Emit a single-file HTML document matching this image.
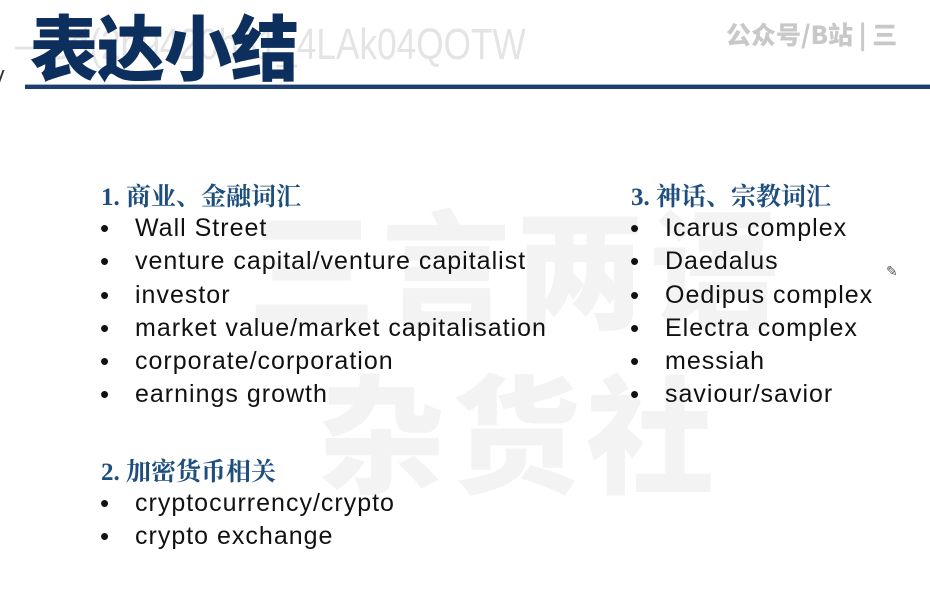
<!DOCTYPE html>
<html><head><meta charset="utf-8"><style>
body{margin:0;width:930px;height:600px;overflow:hidden;background:#fff;position:relative;font-family:"Liberation Sans","Noto Sans CJK SC",sans-serif}
.abs{position:absolute;white-space:nowrap}
.title{left:30px;top:-8px;font-size:68px;font-weight:900;color:#0c2f5e;font-family:"Noto Sans CJK SC",sans-serif;letter-spacing:-1px;transform:scaleY(1.05);transform-origin:top left}
.wm1{left:15px;top:20px;font-size:44px;color:#e4e4e4;transform:scaleX(.8);transform-origin:left}
.brand{left:726px;top:16px;font-size:25px;font-weight:900;color:#c8c8c8;font-family:"Noto Sans CJK SC",sans-serif}
.line{left:25px;top:84px;width:905px;height:4px;background:#1e3f6e;border-top:1px solid #9fb0c8}
.big{font-family:"Noto Sans CJK SC",sans-serif;font-weight:900;color:#f3f3f3;font-size:128px;letter-spacing:6px}
h2{position:absolute;margin:0;font-size:25px;font-weight:bold;color:#1d4e7e;font-family:"Liberation Serif","Noto Serif CJK SC",serif;white-space:nowrap}
ul{position:absolute;margin:0;padding:0;list-style:none;font-size:25px;color:#111;font-family:"Liberation Sans",sans-serif}
li{height:33.3px;line-height:33.3px;position:relative;padding-left:35px;white-space:nowrap;letter-spacing:1px}
li:before{content:"•";position:absolute;left:0;font-size:26px}
</style></head><body>
<div class="abs big" style="left:248px;top:170px">三言两语</div>
<div class="abs big" style="left:318px;top:335px">杂货社</div>
<div class="abs wm1">—3d(2b9420b31_4LAk04QOTW</div>
<div class="abs title">表达小结</div>
<div class="abs brand">公众号/B站 | 三</div>
<div class="abs" style="left:0;top:70px;width:5px;height:14px;border-left:2px solid #333;transform:skewX(-20deg)"></div>
<div class="abs line"></div>
<h2 style="left:101px;top:177px">1. 商业、金融词汇</h2>
<ul style="left:100px;top:212px">
<li>Wall Street</li><li>venture capital/venture capitalist</li><li>investor</li><li>market value/market capitalisation</li><li>corporate/corporation</li><li>earnings growth</li></ul>
<h2 style="left:101px;top:452px">2. 加密货币相关</h2>
<ul style="left:100px;top:487px"><li>cryptocurrency/crypto</li><li>crypto exchange</li></ul>
<h2 style="left:631px;top:177px">3. 神话、宗教词汇</h2>
<ul style="left:630px;top:212px"><li>Icarus complex</li><li>Daedalus</li><li>Oedipus complex</li><li>Electra complex</li><li>messiah</li><li>saviour/savior</li></ul>
<div class="abs" style="left:886px;top:263px;font-size:14px;color:#555">✎</div>
</body></html>
